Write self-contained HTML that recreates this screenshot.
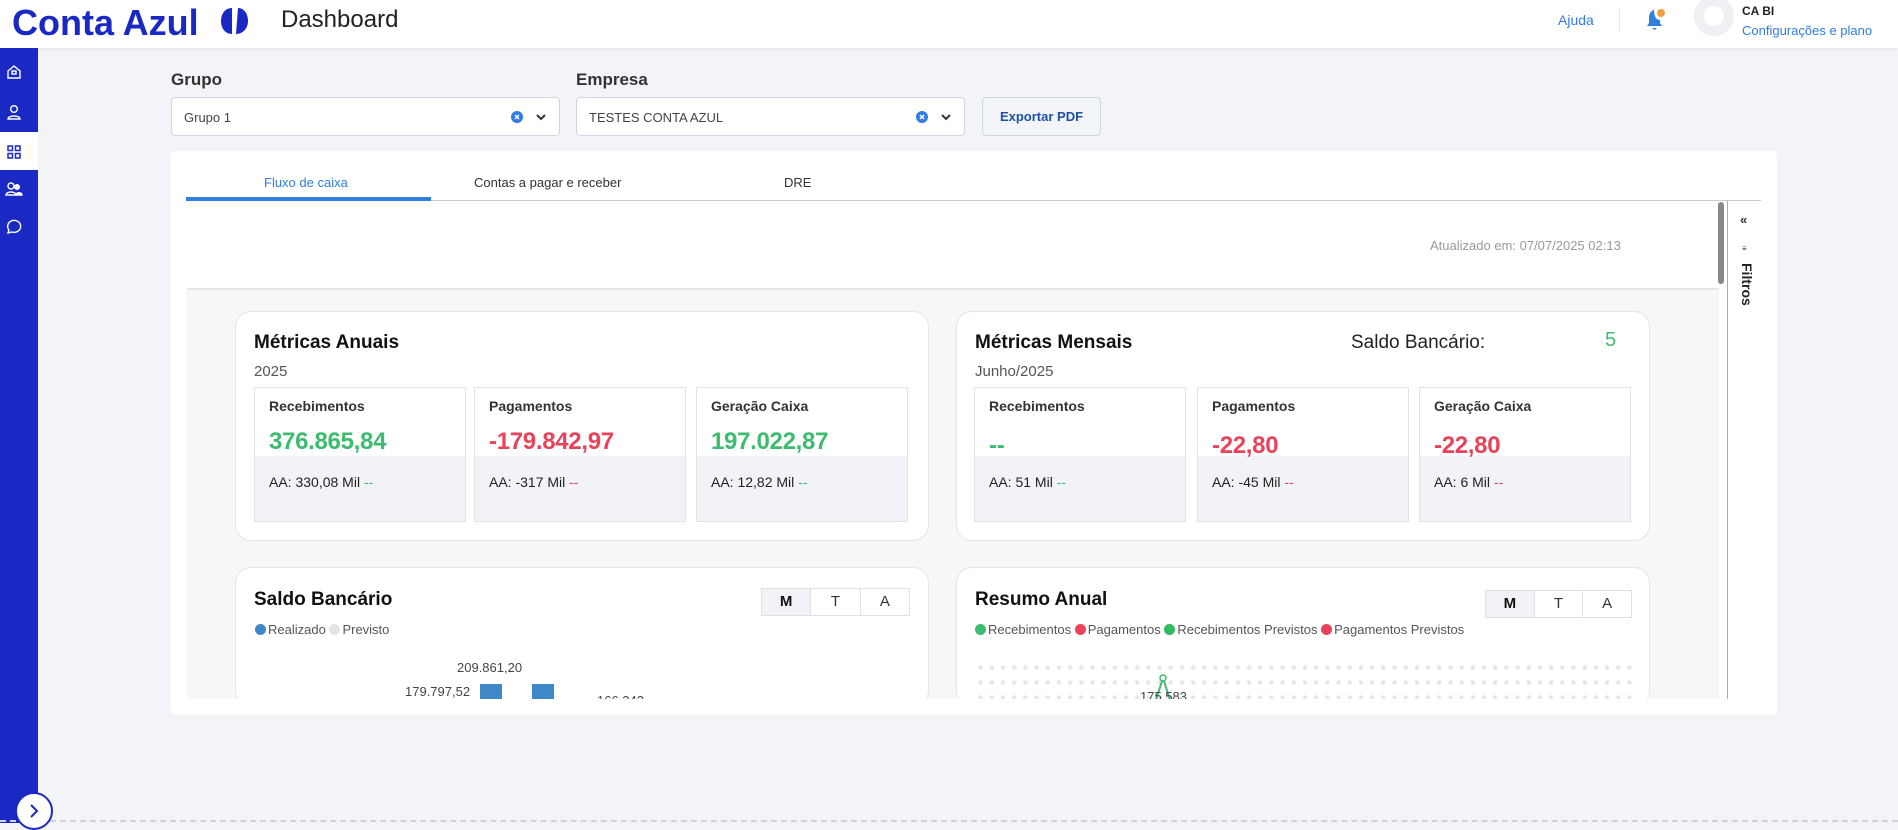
<!DOCTYPE html>
<html><head><meta charset="utf-8"><style>
*{box-sizing:border-box;margin:0;padding:0}
body{width:1898px;height:823px;overflow:hidden;background:#f2f4f8;font-family:"Liberation Sans",sans-serif;position:relative;color:#222}
.abs{position:absolute}
.hdr{left:0;top:0;width:1898px;height:48px;background:#fff;box-shadow:0 1px 3px rgba(0,0,0,.08)}
.side{left:0;top:48px;width:38px;height:775px;background:#1b29c4}
.sel{background:#fff;border:1px solid #cfd6e0;border-radius:4px;height:39px;font-size:13px;color:#444;padding:12px 12px}
.lbl{font-size:17px;color:#333;font-weight:bold}
.card{background:#fff;border:1px solid #e3e5e8;border-radius:16px}
.box{border:1px solid #e0e2e6;background:#f2f3f7}
.box .t{background:#fff;height:68px;padding:10px 14px;font-size:14px;font-weight:bold;color:#333}
.box .v{font-size:24px;font-weight:bold;margin-top:14px;letter-spacing:-0.3px}
.box .a{padding:18px 14px;font-size:14px;color:#222}
.g{color:#3dbb6e}.r{color:#e8435a}
.h2{font-size:19px;font-weight:bold;color:#111}
.mta{display:flex;border:1px solid #dde0e4;height:28px}
.mta div{flex:1;text-align:center;font-size:15px;line-height:26px;color:#333;border-left:1px solid #dde0e4}
.mta div:first-child{border-left:0;background:#f0f2f5;font-weight:bold;color:#111}
.dot{display:inline-block;width:11px;height:11px;border-radius:50%;vertical-align:-1px;margin-right:2px}
.leg{font-size:13px;color:#555}
</style></head><body>
<div class="abs hdr"></div>
<div class="abs" style="left:12px;top:2px;font-size:36px;font-weight:bold;color:#1b29c4;letter-spacing:0px">Conta Azul</div>
<svg class="abs" style="left:220px;top:7px" width="29" height="28" viewBox="0 0 29 28"><path d="M12 1C5 1 1 7 1 14s4 13 11 13z" fill="#1b29c4"/><path d="M16 27c7 0 12-6 12-13S24 1 18 1z" fill="#1b29c4"/></svg>
<div class="abs" style="left:281px;top:6px;font-size:24px;color:#222">Dashboard</div>
<div class="abs" style="left:1558px;top:12px;font-size:14px;color:#2f7ee0">Ajuda</div>
<div class="abs" style="left:1619px;top:8px;width:1px;height:24px;background:#e4e6ea"></div>
<svg class="abs" style="left:1645px;top:8px" width="20" height="24" viewBox="0 0 20 24"><path d="M9 2C5 3 4 7 4 11v4l-2 3h15l-2-3v-3C10 12 9 6 9 2z" fill="#2f7ee0"/><path d="M7 20h5l-2.5 2z" fill="#2f7ee0"/><circle cx="16" cy="5" r="4" fill="#f0a040"/></svg>
<div class="abs" style="left:1694px;top:-4px;width:40px;height:40px;border-radius:50%;background:#eef0f3;overflow:hidden"><div style="margin:10px auto;width:20px;height:20px;border-radius:50%;background:#fff"></div></div>
<div class="abs" style="left:1742px;top:4px;font-size:12px;font-weight:bold;color:#222">CA BI</div>
<div class="abs" style="left:1742px;top:23px;font-size:13px;color:#2f7ee0">Configurações e plano</div>

<div class="abs side"></div>
<div class="abs" style="left:0;top:132px;width:38px;height:38px;background:#fff"></div>
<svg class="abs" style="left:6px;top:64px" width="16" height="16" viewBox="0 0 16 16" fill="none" stroke="#fff" stroke-width="1.4"><path d="M2 7L8 2l6 5v7H2z"/><rect x="6" y="7" width="4" height="3"/></svg>
<svg class="abs" style="left:6px;top:104px" width="16" height="16" viewBox="0 0 16 16" fill="none" stroke="#fff" stroke-width="1.4"><circle cx="8" cy="5" r="3.3"/><path d="M2 15c0-4 12-4 12 0z"/></svg>
<svg class="abs" style="left:6px;top:144px" width="16" height="16" viewBox="0 0 16 16" fill="none" stroke="#1b29c4" stroke-width="1.5"><rect x="2" y="2" width="4.5" height="4.5"/><rect x="9.5" y="2" width="4.5" height="4.5"/><rect x="2" y="9.5" width="4.5" height="4.5"/><rect x="9.5" y="9.5" width="4.5" height="4.5"/></svg>
<svg class="abs" style="left:5px;top:181px" width="18" height="16" viewBox="0 0 18 16" fill="none" stroke="#fff" stroke-width="1.4"><circle cx="6" cy="5" r="3"/><path d="M1 14c0-4 10-4 10 0z"/><circle cx="12" cy="6" r="2.3" fill="#fff"/><path d="M11 14c0-3 6-3 6 0z" fill="#fff"/></svg>
<svg class="abs" style="left:5px;top:218px" width="18" height="18" viewBox="0 0 18 18" fill="none" stroke="#fff" stroke-width="1.4"><path d="M3 15l1-3A6.5 6 0 1 1 7 14z"/></svg>

<div class="abs lbl" style="left:171px;top:70px">Grupo</div>
<div class="abs sel" style="left:171px;top:97px;width:389px">Grupo 1</div>
<div class="abs lbl" style="left:576px;top:70px">Empresa</div>
<div class="abs sel" style="left:576px;top:97px;width:389px">TESTES CONTA AZUL</div>
<svg class="abs" style="left:511px;top:110px" width="40" height="14"><circle cx="6" cy="7" r="6" fill="#2f7ee0"/><path d="M4 5l4 4M8 5l-4 4" stroke="#fff" stroke-width="1.5"/><path d="M26 5l4 4 4-4" stroke="#333" stroke-width="2" fill="none"/></svg>
<svg class="abs" style="left:916px;top:110px" width="40" height="14"><circle cx="6" cy="7" r="6" fill="#2f7ee0"/><path d="M4 5l4 4M8 5l-4 4" stroke="#fff" stroke-width="1.5"/><path d="M26 5l4 4 4-4" stroke="#333" stroke-width="2" fill="none"/></svg>
<div class="abs" style="left:982px;top:97px;width:119px;height:39px;border:1px solid #cfd6e0;border-radius:4px;background:#f2f4f8;font-size:13px;font-weight:bold;color:#1f4fa8;text-align:center;line-height:37px">Exportar PDF</div>

<div class="abs" style="left:171px;top:151px;width:1606px;height:564px;background:#fff;border-radius:5px"></div>
<div class="abs" style="left:186px;top:200px;width:1575px;height:1px;background:#c8cacd"></div>
<div class="abs" style="left:186px;top:197px;width:245px;height:4px;background:#2f7ee0"></div>
<div class="abs" style="left:264px;top:175px;font-size:13px;color:#2f7ee0">Fluxo de caixa</div>
<div class="abs" style="left:474px;top:175px;font-size:13px;color:#333">Contas a pagar e receber</div>
<div class="abs" style="left:784px;top:175px;font-size:13px;color:#333">DRE</div>

<div class="abs" style="left:187px;top:288px;width:1532px;height:411px;background:#f7f7f7;border-top:2px solid #e6e6e6"></div>
<div class="abs" style="left:1430px;top:238px;font-size:13px;color:#999">Atualizado em: 07/07/2025 02:13</div>
<div class="abs" style="left:1718px;top:202px;width:6px;height:82px;border-radius:3px;background:#888"></div>
<div class="abs" style="left:1727px;top:201px;width:1px;height:498px;background:#aaa"></div>
<div class="abs" style="left:1740px;top:212px;font-size:13px;font-weight:bold;color:#333">«</div>
<div class="abs" style="left:1742px;top:244px;font-size:8px;color:#333">≡</div>
<div class="abs" style="font-size:14px;font-weight:bold;color:#222;transform:rotate(90deg);transform-origin:left top;left:1755px;top:263px">Filtros</div>

<!-- Métricas Anuais -->
<div class="abs card" style="left:235px;top:311px;width:694px;height:230px"></div>
<div class="abs h2" style="left:254px;top:332px">Métricas Anuais</div>
<div class="abs" style="left:254px;top:363px;font-size:15px;color:#555">2025</div>
<div class="abs box" style="left:254px;top:387px;width:212px;height:135px"><div class="t">Recebimentos<div class="v g">376.865,84</div></div><div class="a">AA: 330,08 Mil <span class="g">--</span></div></div>
<div class="abs box" style="left:474px;top:387px;width:212px;height:135px"><div class="t">Pagamentos<div class="v r">-179.842,97</div></div><div class="a">AA: -317 Mil <span class="r">--</span></div></div>
<div class="abs box" style="left:696px;top:387px;width:212px;height:135px"><div class="t">Geração Caixa<div class="v g">197.022,87</div></div><div class="a">AA: 12,82 Mil <span class="g">--</span></div></div>

<!-- Métricas Mensais -->
<div class="abs card" style="left:956px;top:311px;width:694px;height:230px"></div>
<div class="abs h2" style="left:975px;top:332px">Métricas Mensais</div>
<div class="abs" style="left:975px;top:363px;font-size:15px;color:#555">Junho/2025</div>
<div class="abs" style="left:1351px;top:332px;font-size:19px;color:#222">Saldo Bancário:</div>
<div class="abs g" style="left:1605px;top:329px;font-size:20px">5</div>
<div class="abs box" style="left:974px;top:387px;width:212px;height:135px"><div class="t">Recebimentos<div class="v g" style="margin-top:18px">--</div></div><div class="a">AA: 51 Mil <span class="g">--</span></div></div>
<div class="abs box" style="left:1197px;top:387px;width:212px;height:135px"><div class="t">Pagamentos<div class="v r" style="margin-top:18px">-22,80</div></div><div class="a">AA: -45 Mil <span class="r">--</span></div></div>
<div class="abs box" style="left:1419px;top:387px;width:212px;height:135px"><div class="t">Geração Caixa<div class="v r" style="margin-top:18px">-22,80</div></div><div class="a">AA: 6 Mil <span class="r">--</span></div></div>

<!-- second row -->
<div class="abs card" style="left:235px;top:567px;width:694px;height:140px"></div>
<div class="abs h2" style="left:254px;top:589px">Saldo Bancário</div>
<div class="abs mta" style="left:761px;top:588px;width:149px"><div>M</div><div>T</div><div>A</div></div>
<div class="abs leg" style="left:255px;top:622px"><span class="dot" style="background:#3f88c8"></span>Realizado <span class="dot" style="background:#e3e4e6"></span>Previsto</div>
<div class="abs" style="left:457px;top:660px;font-size:13px;color:#444">209.861,20</div>
<div class="abs" style="left:405px;top:684px;font-size:13px;color:#444">179.797,52</div>
<div class="abs" style="left:480px;top:684px;width:22px;height:20px;background:#3f88c8"></div>
<div class="abs" style="left:532px;top:684px;width:22px;height:20px;background:#3f88c8"></div>
<div class="abs" style="left:597px;top:693px;font-size:13px;color:#444">166.242</div>

<div class="abs card" style="left:956px;top:567px;width:694px;height:140px"></div>
<div class="abs h2" style="left:975px;top:589px">Resumo Anual</div>
<div class="abs mta" style="left:1485px;top:590px;width:147px"><div>M</div><div>T</div><div>A</div></div>
<div class="abs leg" style="left:975px;top:622px"><span class="dot" style="background:#3dbb6e"></span>Recebimentos <span class="dot" style="background:#e8435a"></span>Pagamentos <span class="dot" style="background:#2dbb5e"></span>Recebimentos Previstos <span class="dot" style="background:#e8435a"></span>Pagamentos Previstos</div>
<div class="abs" style="left:975px;top:660px;width:660px;height:40px;background-image:radial-gradient(circle,#e6e7ea 2px,transparent 2.5px);background-size:11.2px 15px"></div>
<svg class="abs" style="left:1150px;top:672px" width="30" height="30"><path d="M13 6L6 28M13 6l7 22" stroke="#3dbb6e" stroke-width="2" fill="none"/><circle cx="13" cy="6" r="3" fill="#fff" stroke="#3dbb6e" stroke-width="1.5"/></svg>
<div class="abs" style="left:1140px;top:689px;font-size:13px;color:#444">175.583</div>
<div class="abs" style="left:187px;top:699px;width:1590px;height:16px;background:#fff"></div>

<div class="abs" style="left:0;top:820px;width:1898px;height:0;border-top:2px dashed #cfd2d6"></div>
<div class="abs" style="left:15px;top:792px;width:38px;height:38px;border-radius:50%;background:#fff;border:2px solid #1b29c4"></div>
<svg class="abs" style="left:28px;top:803px" width="12" height="16"><path d="M3 2l6 6-6 6" stroke="#1b29c4" stroke-width="2" fill="none"/></svg>
</body></html>
